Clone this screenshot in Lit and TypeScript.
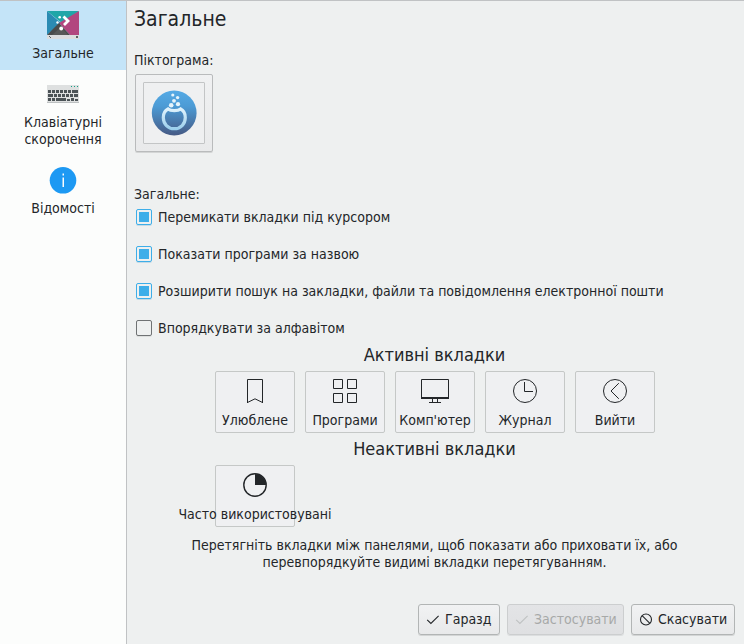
import { LitElement, html, css, svg } from "lit";
import { customElement, property } from "lit/decorators.js";
import { classMap } from "lit/directives/class-map.js";

const ICONS: Record<string, unknown> = {
  bookmark: svg`<path d="M6.5 24V.5h15V24" /><path d="M6.5 23.5L14 19.8L21.5 23.5" stroke-width="1" />`,
  grid: svg`<path d="M2.5.5h9v9h-9zM16.5.5h9v9h-9zM2.5 14.5h9v9h-9zM16.5 14.5h9v9h-9z" />`,
  computer: svg`<path d="M.5 .5h27v18h-27z" /><path d="M0 19h28" stroke-width="2" /><path d="M11.5 19v4M16.5 19v4M8 23.5h12" />`,
  clock: svg`<circle cx="14" cy="12" r="11.5" /><path d="M13.5 3v9.5H22" />`,
  leave: svg`<circle cx="14" cy="12" r="11.5" /><path d="M17.8 4.2L10 12L17.8 19.8" />`,
  pie: svg`<circle cx="14" cy="12" r="11.2" stroke-width="1.4" /><path d="M14 1v11h11A11 11 0 0 0 14 1z" fill="#232629" stroke="none" />`,
};

@customElement("tab-tile")
class TabTile extends LitElement {
  static styles = css`
    :host {
      display: flex;
      flex-direction: column;
      align-items: center;
      box-sizing: border-box;
      width: 80px;
      height: 62px;
      padding-top: 7px;
      border: 1px solid #c5c8c7;
      border-radius: 2px;
      background: #eff0f2;
    }
    svg {
      display: block;
      flex: none;
      width: 28px;
      height: 24px;
      overflow: visible;
      fill: none;
      stroke: #232629;
      stroke-width: 1;
    }
    .label {
      margin-top: 9px;
      line-height: 17px;
      white-space: nowrap;
    }
  `;
  @property() icon = "";
  @property() label = "";
  render() {
    return html`<svg viewBox="0 0 28 24">${ICONS[this.icon]}</svg><span class="label">${this.label}</span>`;
  }
}

@customElement("check-row")
class CheckRow extends LitElement {
  static styles = css`
    :host {
      display: flex;
      align-items: flex-start;
      gap: 6px;
      height: 17px;
      line-height: 17px;
      white-space: nowrap;
    }
    .box {
      box-sizing: border-box;
      width: 16px;
      height: 16px;
      padding: 2px;
      border: 1px solid #6f7274;
      border-radius: 2px;
      box-shadow: 0 1px 0 #dcdedd;
    }
    .on {
      border-color: #3daee9;
      box-shadow: 0 1px 0 #c3dae6;
    }
    .on::before {
      content: "";
      display: block;
      width: 10px;
      height: 10px;
      background: #3daee9;
    }
  `;
  @property({ type: Boolean }) checked = false;
  @property() label = "";
  render() {
    return html`<span class=${classMap({ box: true, on: this.checked })}></span><span>${this.label}</span>`;
  }
}

@customElement("push-button")
class PushButton extends LitElement {
  static styles = css`
    :host {
      display: block;
    }
    button {
      display: flex;
      align-items: center;
      gap: 5px;
      box-sizing: border-box;
      width: 100%;
      height: 31px;
      padding: 0 0 0 7px;
      border: 1px solid #b2b5b5;
      border-radius: 3px;
      background: linear-gradient(#f1f2f3, #e8e9ea);
      box-shadow: 0 1px 0 #d3d5d5;
      color: #232629;
      font: inherit;
      line-height: 17px;
      white-space: nowrap;
    }
    button:disabled {
      border-color: #cccecf;
      background: linear-gradient(#e3e4e6, #dfe0e2);
      box-shadow: 0 1px 0 #dcdedf;
      color: #a7a9a8;
    }
    svg {
      flex: none;
      width: 14px;
      height: 14px;
      fill: none;
      stroke: currentColor;
      stroke-width: 1.1;
    }
    button:disabled svg {
      stroke: #bfc2c2;
    }
  `;
  @property() label = "";
  @property() icon = "";
  @property({ type: Boolean }) disabled = false;
  render() {
    return html`<button ?disabled=${this.disabled}>
      <svg viewBox="0 0 14 14">
        ${this.icon === "cancel"
          ? svg`<circle cx="7" cy="6.5" r="5.5" /><path d="M3.1 2.6L10.9 10.4" />`
          : svg`<path d="M1.2 6.8L4.9 10.5L12.6 2.8" />`}
      </svg>
      <span>${this.label}</span>
    </button>`;
  }
}

@customElement("app-root")
class AppRoot extends LitElement {
  static styles = css`
    :host {
      display: flex;
      box-sizing: border-box;
      width: 744px;
      height: 644px;
      border-top: 1px solid #c0c2c4;
      background: #eef0f0;
      color: #232629;
      font: 14px/17px "DejaVu Sans Condensed", "DejaVu Sans", sans-serif;
      font-stretch: condensed;
      overflow: hidden;
    }
    nav {
      box-sizing: border-box;
      flex: none;
      width: 127px;
      border-right: 1px solid #c0c2c4;
      background: #fcfdfc;
      text-align: center;
    }
    .item {
      display: flex;
      flex-direction: column;
      align-items: center;
      box-sizing: border-box;
      height: 69px;
      padding-top: 7px;
    }
    .item svg {
      display: block;
      width: 32px;
      height: 32px;
      margin-bottom: 5px;
    }
    .active {
      background: #c4e4f8;
    }
    .tall {
      height: 86px;
    }
    main {
      flex: 1;
      min-width: 0;
      display: flex;
      flex-direction: column;
      padding: 6px 9px 9px 7px;
    }
    h1,
    h2 {
      margin: 0;
      font-weight: normal;
    }
    h1 {
      font-size: 21px;
      line-height: 24px;
    }
    .field {
      margin-top: 21px;
    }
    .picker {
      box-sizing: border-box;
      width: 78px;
      height: 78px;
      margin: 5px 0 0 1px;
      padding: 7px;
      border: 1px solid #b9bbbc;
      border-radius: 2px;
      background: linear-gradient(#f0f1f2, #e9eaeb);
      box-shadow: 0 1px 0 #d3d5d5;
    }
    .frame {
      box-sizing: border-box;
      width: 62px;
      height: 62px;
      padding: 7px;
      border: 1px solid #c3c5c6;
      border-radius: 1px;
      background: #eff0f1;
    }
    .frame svg {
      display: block;
      width: 46px;
      height: 46px;
    }
    .general {
      margin-top: 34px;
    }
    .checks {
      display: flex;
      flex-direction: column;
      gap: 20px;
      margin: 6px 0 0 2px;
    }
    h2 {
      font-size: 18px;
      line-height: 22px;
      text-align: center;
    }
    .first {
      margin-top: 7px;
    }
    .second {
      margin-top: 5px;
    }
    .tiles {
      display: flex;
      gap: 10px;
      margin: 5px 0 0 81px;
    }
    .hint {
      margin-top: 10px;
      text-align: center;
    }
    .buttons {
      display: grid;
      grid-template-columns: 82px 117px 104px;
      gap: 7px;
      justify-content: end;
      margin-top: auto;
    }
  `;

  private themeIcon() {
    return html`<svg viewBox="0 0 32 32">
      <path d="M0 3h32L16 16z" fill="#20a6a8" />
      <path d="M0 3v24L14 15z" fill="#2b8bb3" />
      <path d="M32 3v24H23L12 15z" fill="#b2467f" />
      <path d="M0 27L12 15L23 27z" fill="#4a4b4b" />
      <path d="M5 27L14 19L21 27z" fill="#626260" opacity=".6" />
      <path d="M0 27h32v4H0z" fill="#dcddde" />
      <path d="M2 28h1v1h1v1H3v-1H2zM29 28h2v2h-2z" fill="#5a6062" />
      <path d="M16.5 8.5L21 13L17 17" fill="none" stroke="#fff" stroke-width="2.8" />
      <circle cx="12.7" cy="9.2" r="1.3" fill="#fff" />
      <circle cx="10.5" cy="14.5" r="1.2" fill="#fff" />
      <circle cx="14.2" cy="20.5" r="1.9" fill="#fff" />
    </svg>`;
  }

  private keyboardIcon() {
    return html`<svg viewBox="0 0 32 32">
      <path d="M0 8h32v18H0z" fill="#dee0e0" />
      <path d="M0 25h32v1H0z" fill="#bcc0c1" />
      <path d="M24 9h1v1h-1zM27 9h1v1h-1zM30 9h1v1h-1z" fill="#16a085" />
      ${[1, 5, 9, 13, 17, 21].map((x) => svg`<path d="M${x} 13h3v3h-3z" fill="#4b5356" />`)}
      <path d="M25 13h6v3h-6z" fill="#4b5356" />
      <path d="M1 17h5v3H1zM27 17h4v3h-4z" fill="#4b5356" />
      ${[7, 11, 15, 19, 23].map((x) => svg`<path d="M${x} 17h3v3h-3z" fill="#4b5356" />`)}
      <path d="M1 21h3v3H1zM5 21h3v3H5zM9 21h10v3H9zM20 22h3v2h-3zM24 21h3v3h-3zM28 22h3v2h-3z" fill="#4b5356" />
    </svg>`;
  }

  private infoIcon() {
    return html`<svg viewBox="0 0 32 32">
      <circle cx="16" cy="17.3" r="13.3" fill="#1d99f3" />
      <path d="M15.5 10.5h1.5v2h-1.5zM15.5 14.5h1.5v9.5h-1.5z" fill="#fcfcfc" />
    </svg>`;
  }

  private launcherIcon() {
    return html`<svg viewBox="0 0 46 46">
      <defs>
        <linearGradient id="disc" x1="0" y1="0" x2="0" y2="1">
          <stop offset="0" stop-color="#55aae5" />
          <stop offset=".35" stop-color="#4c9bd5" />
          <stop offset="1" stop-color="#465a85" />
        </linearGradient>
        <linearGradient id="flask" x1="0" y1="0" x2="0" y2="1">
          <stop offset="0" stop-color="#dff2fc" />
          <stop offset="1" stop-color="#9ccfec" />
        </linearGradient>
      </defs>
      <circle cx="23.2" cy="23" r="22.4" fill="url(#disc)" />
      <path
        d="M17 19C14 20.5 12.3 23.3 12.3 27.5C12.3 34 17 38.7 23.3 38.7S34.3 34 34.3 27.5C34.3 23.3 32.6 20.5 29.6 19C27 21.2 19.6 21.2 17 19z"
        fill="none"
        stroke="url(#flask)"
        stroke-width="3.2"
      />
      <g fill="#e6f4fb">
        <circle cx="21.8" cy="5" r="1.6" />
        <circle cx="26.6" cy="7.6" r="1.7" />
        <circle cx="23" cy="10.8" r="1.9" />
        <circle cx="27" cy="14.2" r="2.1" />
        <circle cx="20.2" cy="15.3" r="2.3" />
      </g>
    </svg>`;
  }

  render() {
    return html`
      <nav>
        <div class="item active">${this.themeIcon()}<span>Загальне</span></div>
        <div class="item tall">${this.keyboardIcon()}<span>Клавіатурні<br />скорочення</span></div>
        <div class="item">${this.infoIcon()}<span>Відомості</span></div>
      </nav>
      <main>
        <h1>Загальне</h1>
        <div class="field">Піктограма:</div>
        <div class="picker"><div class="frame">${this.launcherIcon()}</div></div>
        <div class="general">Загальне:</div>
        <div class="checks">
          <check-row checked label="Перемикати вкладки під курсором"></check-row>
          <check-row checked label="Показати програми за назвою"></check-row>
          <check-row checked label="Розширити пошук на закладки, файли та повідомлення електронної пошти"></check-row>
          <check-row label="Впорядкувати за алфавітом"></check-row>
        </div>
        <h2 class="first">Активні вкладки</h2>
        <div class="tiles">
          <tab-tile icon="bookmark" label="Улюблене"></tab-tile>
          <tab-tile icon="grid" label="Програми"></tab-tile>
          <tab-tile icon="computer" label="Комп'ютер"></tab-tile>
          <tab-tile icon="clock" label="Журнал"></tab-tile>
          <tab-tile icon="leave" label="Вийти"></tab-tile>
        </div>
        <h2 class="second">Неактивні вкладки</h2>
        <div class="tiles"><tab-tile icon="pie" label="Часто використовувані"></tab-tile></div>
        <div class="hint">
          Перетягніть вкладки між панелями, щоб показати або приховати їх, або<br />перевпорядкуйте видимі вкладки
          перетягуванням.
        </div>
        <div class="buttons">
          <push-button icon="ok" label="Гаразд"></push-button>
          <push-button icon="ok" label="Застосувати" disabled></push-button>
          <push-button icon="cancel" label="Скасувати"></push-button>
        </div>
      </main>
    `;
  }
}
